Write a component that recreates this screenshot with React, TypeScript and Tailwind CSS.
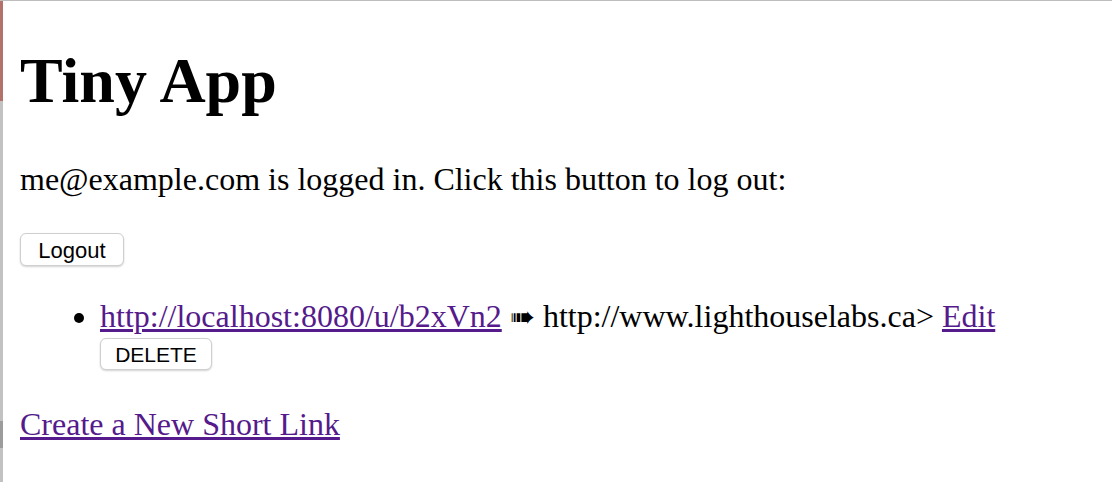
export default function App() {
  return (
    <div className="flex min-h-screen w-full border-t border-[#bdbdbd] bg-white text-black">
      <div className="flex w-[3px] shrink-0 flex-col">
        <div className="h-[100px] bg-[#b4716a]" />
        <div className="h-[320px] bg-[#c2c2c2]" />
        <div className="h-[27px] bg-[#9c9c9c]" />
        <div className="flex-1 bg-[#c2c2c2]" />
      </div>
      <div className="flex-1 pl-[17px] font-['Liberation_Serif',serif]">
        <h1 className="mt-[43px] text-[64px] font-bold leading-[74px]">Tiny App</h1>
        <p className="mt-[43px] text-[32px] leading-[37px]">
          me@example.com is logged in. Click this button to log out:
        </p>
        <form className="mt-[35px]">
          <button
            type="button"
            className="h-[33px] w-[104px] rounded-[6px] border border-[#cfcfcf] bg-white font-['Liberation_Sans',sans-serif] text-[22px] shadow-[0_1px_2px_rgba(0,0,0,0.18)]"
          >
            Logout
          </button>
        </form>
        <ul className="mt-[32px] list-disc pl-[80px] text-[32px] leading-[37px]">
          <li>
            <a href="#" className="text-[#551a8b] underline">
              http://localhost:8080/u/b2xVn2
            </a>{" "}
            <span className="font-['DejaVu_Sans',sans-serif] text-[30px] leading-none">➠</span> http://www.lighthouselabs.ca&gt;{" "}
            <a href="#" className="text-[#551a8b] underline">
              Edit
            </a>
            <form className="pt-[3px]">
              <button
                type="button"
                className="block h-[32px] w-[112px] rounded-[6px] border border-[#cfcfcf] bg-white font-['Liberation_Sans',sans-serif] text-[21px] leading-none shadow-[0_1px_2px_rgba(0,0,0,0.18)]"
              >
                DELETE
              </button>
            </form>
          </li>
        </ul>
        <a href="#" className="mt-[36px] block w-fit text-[32px] leading-[37px] text-[#551a8b] underline">
          Create a New Short Link
        </a>
      </div>
    </div>
  );
}
